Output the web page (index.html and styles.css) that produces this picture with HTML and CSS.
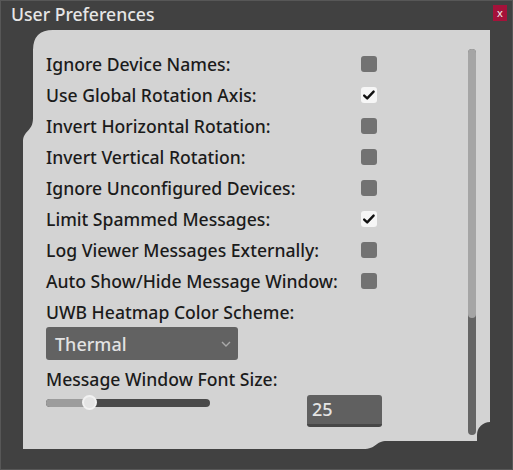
FILE: index.html
```html
<!DOCTYPE html>
<html>
<head>
<meta charset="utf-8">
<link rel="stylesheet" href="styles.css">
</head>
<body>
<div class="window">
  <div class="titlebar">
    <span class="title">User Preferences</span>
    <span class="close">x</span>
  </div>
  <div class="panel">
    <div class="content">
      <div class="row"><span class="label">Ignore Device Names:</span><span class="check"></span></div>
      <div class="row"><span class="label">Use Global Rotation Axis:</span><span class="check on"><svg viewBox="0 0 16 16" width="16" height="16"><path d="M3.2 8.6 L6.2 11.4 L12.6 4.6" fill="none" stroke="#111" stroke-width="2.4" stroke-linecap="round" stroke-linejoin="round"/></svg></span></div>
      <div class="row"><span class="label">Invert Horizontal Rotation:</span><span class="check"></span></div>
      <div class="row"><span class="label">Invert Vertical Rotation:</span><span class="check"></span></div>
      <div class="row"><span class="label">Ignore Unconfigured Devices:</span><span class="check"></span></div>
      <div class="row"><span class="label">Limit Spammed Messages:</span><span class="check on"><svg viewBox="0 0 16 16" width="16" height="16"><path d="M3.2 8.6 L6.2 11.4 L12.6 4.6" fill="none" stroke="#111" stroke-width="2.4" stroke-linecap="round" stroke-linejoin="round"/></svg></span></div>
      <div class="row"><span class="label">Log Viewer Messages Externally:</span><span class="check"></span></div>
      <div class="row"><span class="label">Auto Show/Hide Message Window:</span><span class="check"></span></div>
      <div class="row"><span class="label">UWB Heatmap Color Scheme:</span></div>
      <div class="dropdown"><span>Thermal</span><svg class="chev" viewBox="0 0 10 6" width="10" height="6"><path d="M1 1 L5 5 L9 1" fill="none" stroke="#a9a9a9" stroke-width="1.4"/></svg></div>
      <div class="row row-label"><span class="label">Message Window Font Size:</span></div>
      <div class="slider-row">
        <div class="slider">
          <div class="track"><div class="fill"></div></div>
          <div class="grabber"></div>
        </div>
        <div class="numbox">25</div>
      </div>
    </div>
    <div class="scrollbar"><div class="thumb"></div></div>
  </div>
</div>
</body>
</html>
```

FILE: styles.css
```css
html, body {
  margin: 0;
  padding: 0;
  background: #414141;
}
.window {
  width: 513px;
  height: 470px;
  box-sizing: border-box;
  background: #414141;
  border: 1px solid #575757;
  font-family: "Noto Sans", "Open Sans", sans-serif;
  display: flex;
  flex-direction: column;
}
.titlebar {
  height: 29px;
  display: flex;
  align-items: flex-start;
  justify-content: space-between;
  padding: 0 5px 0 10px;
}
.title {
  color: #e6e6e6;
  font-size: 17.6px;
  line-height: 26px;
  font-weight: 500;
}
.close {
  margin-top: 4px;
  width: 14px;
  height: 16px;
  background: #a5123a;
  color: #f2f2f2;
  font-size: 11px;
  line-height: 15px;
  text-align: center;
}
.panel {
  margin-left: 22px;
  width: 467px;
  height: 419px;
  background: #d3d3d3;
  clip-path: path("M 30 0 L 467 0 L 467 392 A 13 13 0 0 0 454 405 L 454 411 L 364 411 C 352 411 354 419 340 419 L 0 419 L 0 112 C 0 100 10 102 10 88 L 10 20 Q 10 0 30 0 Z");
  display: flex;
  box-sizing: border-box;
  padding: 18px 14px 14px 23px;
}
.content {
  flex: 1;
  display: flex;
  flex-direction: column;
}
.row {
  height: 31px;
  display: flex;
  align-items: center;
}
.label {
  width: 315px;
  color: #1b1b1b;
  font-size: 17.6px;
  font-weight: 500;
}
.check {
  width: 16px;
  height: 16px;
  border-radius: 3px;
  background: #727272;
  display: flex;
}
.check.on {
  background: #f6f6f6;
}
.dropdown {
  width: 192px;
  height: 33px;
  box-sizing: border-box;
  background: #626262;
  border-radius: 3px;
  display: flex;
  align-items: center;
  justify-content: space-between;
  padding: 0 7px 0 9px;
  color: #e2e2e2;
  font-size: 18px;
  font-weight: 500;
}
.chev {
  margin-top: 1px;
}
.row-label {
  margin-top: 3px;
}
.slider-row {
  display: flex;
  align-items: flex-start;
  margin-top: 1px;
}
.slider {
  position: relative;
  width: 164px;
  height: 16px;
  display: flex;
  align-items: center;
}
.track {
  width: 100%;
  height: 8px;
  border-radius: 4px;
  background: #4a4a4a;
  overflow: hidden;
}
.fill {
  width: 44px;
  height: 100%;
  background: #9c9c9c;
}
.grabber {
  position: absolute;
  left: 36px;
  top: 0;
  width: 15px;
  height: 15px;
  box-sizing: border-box;
  border-radius: 50%;
  background: #e4e4e4;
  border: 2px solid #f2f2f2;
}
.numbox {
  margin-left: 97px;
  width: 75px;
  height: 32px;
  box-sizing: border-box;
  background: #606060;
  border-radius: 3px;
  border-bottom: 3px solid #474747;
  color: #e4e4e4;
  font-size: 18px;
  font-weight: 500;
  line-height: 28px;
  padding-left: 5px;
}
.scrollbar {
  width: 8px;
  margin-top: 1px;
  border-radius: 4px;
  background: #656565;
  display: flex;
  flex-direction: column;
}
.thumb {
  height: 269px;
  border-radius: 4px;
  background: #a5a5a5;
}
```
